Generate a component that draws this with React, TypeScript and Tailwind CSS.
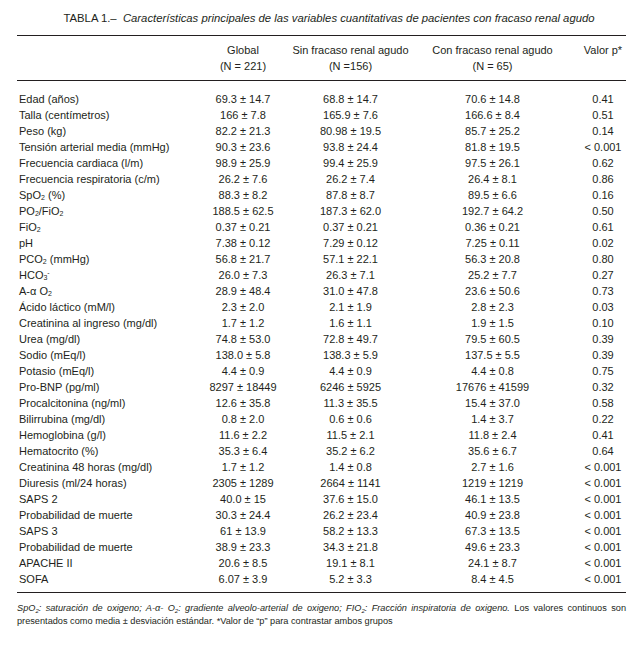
const rows: [React.ReactNode, string, string, string, string][] = [
  ["Edad (años)", "69.3 ± 14.7", "68.8 ± 14.7", "70.6 ± 14.8", "0.41"],
  ["Talla (centímetros)", "166 ± 7.8", "165.9 ± 7.6", "166.6 ± 8.4", "0.51"],
  ["Peso (kg)", "82.2 ± 21.3", "80.98 ± 19.5", "85.7 ± 25.2", "0.14"],
  ["Tensión arterial media (mmHg)", "90.3 ± 23.6", "93.8 ± 24.4", "81.8 ± 19.5", "< 0.001"],
  ["Frecuencia cardiaca (l/m)", "98.9 ± 25.9", "99.4 ± 25.9", "97.5 ± 26.1", "0.62"],
  ["Frecuencia respiratoria (c/m)", "26.2 ± 7.6", "26.2 ± 7.4", "26.4 ± 8.1", "0.86"],
  [<>SpO<sub className="text-[7px]">2</sub> (%)</>, "88.3 ± 8.2", "87.8 ± 8.7", "89.5 ± 6.6", "0.16"],
  [<>PO<sub className="text-[7px]">2</sub>/FiO<sub className="text-[7px]">2</sub></>, "188.5 ± 62.5", "187.3 ± 62.0", "192.7 ± 64.2", "0.50"],
  [<>FiO<sub className="text-[7px]">2</sub></>, "0.37 ± 0.21", "0.37 ± 0.21", "0.36 ± 0.21", "0.61"],
  ["pH", "7.38 ± 0.12", "7.29 ± 0.12", "7.25 ± 0.11", "0.02"],
  [<>PCO<sub className="text-[7px]">2</sub> (mmHg)</>, "56.8 ± 21.7", "57.1 ± 22.1", "56.3 ± 20.8", "0.80"],
  [<>HCO<sub className="text-[7px]">3</sub><sup className="text-[7px]">-</sup></>, "26.0 ± 7.3", "26.3 ± 7.1", "25.2 ± 7.7", "0.27"],
  [<>A-α O<sub className="text-[7px]">2</sub></>, "28.9 ± 48.4", "31.0 ± 47.8", "23.6 ± 50.6", "0.73"],
  ["Ácido láctico (mM/l)", "2.3 ± 2.0", "2.1 ± 1.9", "2.8 ± 2.3", "0.03"],
  ["Creatinina al ingreso (mg/dl)", "1.7 ± 1.2", "1.6 ± 1.1", "1.9 ± 1.5", "0.10"],
  ["Urea (mg/dl)", "74.8 ± 53.0", "72.8 ± 49.7", "79.5 ± 60.5", "0.39"],
  ["Sodio (mEq/l)", "138.0 ± 5.8", "138.3 ± 5.9", "137.5 ± 5.5", "0.39"],
  ["Potasio (mEq/l)", "4.4 ± 0.9", "4.4 ± 0.9", "4.4 ± 0.8", "0.75"],
  ["Pro-BNP (pg/ml)", "8297 ± 18449", "6246 ± 5925", "17676 ± 41599", "0.32"],
  ["Procalcitonina (ng/ml)", "12.6 ± 35.8", "11.3 ± 35.5", "15.4 ± 37.0", "0.58"],
  ["Bilirrubina (mg/dl)", "0.8 ± 2.0", "0.6 ± 0.6", "1.4 ± 3.7", "0.22"],
  ["Hemoglobina (g/l)", "11.6 ± 2.2", "11.5 ± 2.1", "11.8 ± 2.4", "0.41"],
  ["Hematocrito (%)", "35.3 ± 6.4", "35.2 ± 6.2", "35.6 ± 6.7", "0.64"],
  ["Creatinina 48 horas (mg/dl)", "1.7 ± 1.2", "1.4 ± 0.8", "2.7 ± 1.6", "< 0.001"],
  ["Diuresis (ml/24 horas)", "2305 ± 1289", "2664 ± 1141", "1219 ± 1219", "< 0.001"],
  ["SAPS 2", "40.0 ± 15", "37.6 ± 15.0", "46.1 ± 13.5", "< 0.001"],
  ["Probabilidad de muerte", "30.3 ± 24.4", "26.2 ± 23.4", "40.9 ± 23.8", "< 0.001"],
  ["SAPS 3", "61 ± 13.9", "58.2 ± 13.3", "67.3 ± 13.5", "< 0.001"],
  ["Probabilidad de muerte", "38.9 ± 23.3", "34.3 ± 21.8", "49.6 ± 23.3", "< 0.001"],
  ["APACHE II", "20.6 ± 8.5", "19.1 ± 8.1", "24.1 ± 8.7", "< 0.001"],
  ["SOFA", "6.07 ± 3.9", "5.2 ± 3.3", "8.4 ± 4.5", "< 0.001"],
];

const grid = "grid grid-cols-[173px_106px_109px_175px_46px]";

export default function App() {
  return (
    <div className="w-[643px] h-[660px] bg-white text-[#231f20] font-['Liberation_Sans',Arial,sans-serif] text-[11px] leading-none">
      {/* Title */}
      <div className="pt-[13px] pl-[15px] h-[35px] text-center text-[11.3px] whitespace-nowrap">
        TABLA 1.–&nbsp;&nbsp;<i>Características principales de las variables cuantitativas de pacientes con fracaso renal agudo</i>
      </div>

      <div className="mx-[17px] w-[609px]">
        <div className="border-t-[1.5px] border-[#231f20]" />

        {/* Header */}
        <div className={`${grid} pt-[9px] pb-[8px]`}>
          <div />
          {[
            ["Global", "(N = 221)"],
            ["Sin fracaso renal agudo", "(N =156)"],
            ["Con fracaso renal agudo", "(N = 65)"],
            ["Valor p*", ""],
          ].map(([a, b], i) => (
            <div key={i} className="flex flex-col items-center gap-[5px] whitespace-nowrap">
              <span className="h-[11px]">{a}</span>
              <span className="h-[11px]">{b}</span>
            </div>
          ))}
        </div>

        <div className="border-t-[1.5px] border-[#231f20]" />

        {/* Body */}
        <div className="pt-[10px] pb-[5px]">
          {rows.map((r, i) => (
            <div key={i} className={`${grid} h-[16px] items-center`}>
              <div className="pl-[2px] whitespace-nowrap">{r[0]}</div>
              <div className="text-center whitespace-nowrap">{r[1]}</div>
              <div className="text-center whitespace-nowrap">{r[2]}</div>
              <div className="text-center whitespace-nowrap">{r[3]}</div>
              <div className="text-center whitespace-nowrap">{r[4]}</div>
            </div>
          ))}
        </div>

        <div className="border-t-[1.5px] border-[#231f20]" />

        {/* Footnote */}
        <div className="pt-[9px] text-[9.2px] leading-[13px]">
          <p className="text-justify [text-align-last:justify] whitespace-nowrap">
            <i>
              SpO<sub className="text-[6px] leading-none">2</sub>: saturación de oxigeno; A-α- O<sub className="text-[6px] leading-none">2</sub>: gradiente alveolo-arterial de oxigeno; FIO<sub className="text-[6px] leading-none">2</sub>: Fracción inspiratoria de oxigeno.
            </i>{" "}
            Los valores continuos son
          </p>
          <p>presentados como media ± desviación estándar. *Valor de “p” para contrastar ambos grupos</p>
        </div>
      </div>
    </div>
  );
}
